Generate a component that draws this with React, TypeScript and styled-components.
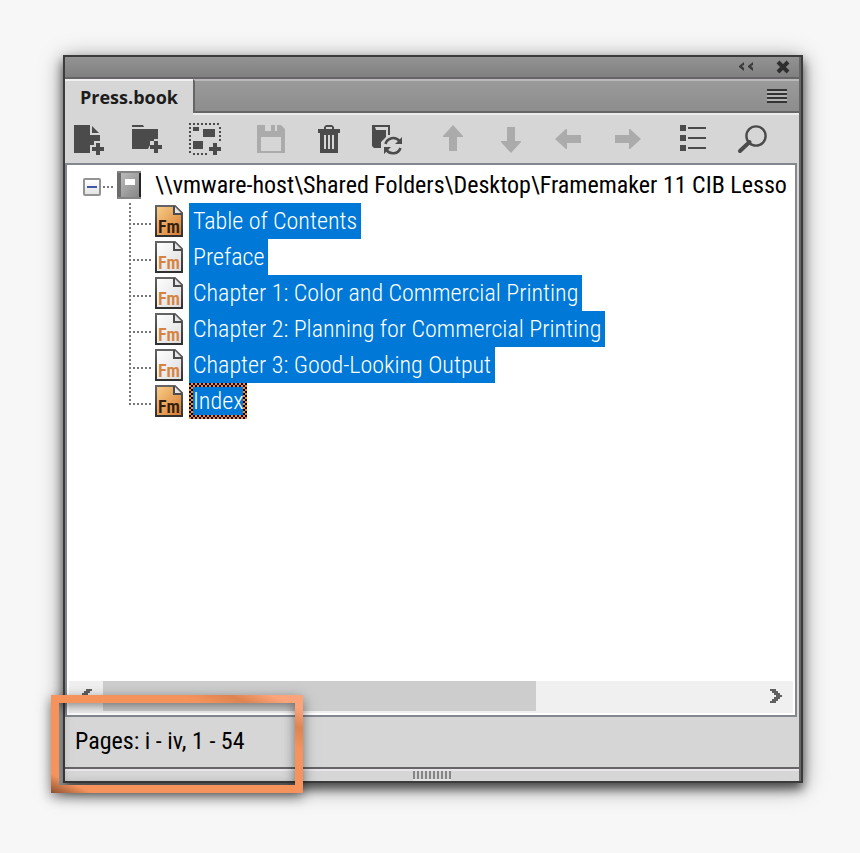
import React from "react";
import styled, { createGlobalStyle, css } from "styled-components";

const ink = "#4b4b4b";
const edge = "#3b3b3b";
const groove = "#666466";
const face = "#d6d6d6";
const listLine = "#828790";
const uiFont = `"Roboto Condensed", Roboto, "Liberation Sans", sans-serif`;

const GlobalStyle = createGlobalStyle`
  *, *::before, *::after { box-sizing: border-box; }
  body { margin: 0; background: #f7f7f7; }
  button { margin: 0; padding: 0; border: 0; background: none; color: inherit; font: inherit; }
  svg { display: block; }
`;

const Page = styled.div`
  display: flex;
  min-height: 100vh;
  padding: 55px 57px 70px 63px;
  font-family: ${uiFont};
  font-size: 24px;
  font-weight: 400;
  color: #000;
`;

const Panel = styled.section`
  position: relative;
  display: flex;
  flex: 1;
  min-width: 0;
  border: 2px solid ${edge};
  background: ${face};
  box-shadow: 0 6px 10px rgba(0, 0, 0, 0.6), 0 4px 22px rgba(0, 0, 0, 0.4);
`;

const PanelBody = styled.div`
  display: flex;
  flex: 1;
  flex-direction: column;
  min-width: 0;
  border-right: 2px solid ${groove};
`;

const TitleBar = styled.header`
  display: flex;
  align-items: center;
  justify-content: flex-end;
  gap: 22px;
  height: 22px;
  padding-right: 9px;
  border-bottom: 2px solid ${groove};
  background: linear-gradient(#939393, #808080);
`;

const TabBar = styled.div`
  display: flex;
  height: 36px;
`;

const Tab = styled.button`
  height: 36px;
  padding: 0 15px 2px;
  border-top: 2px solid #f0f0f0;
  background: ${face};
  color: #1c1c1c;
  font-family: "Open Sans", "Noto Sans", sans-serif;
  font-size: 18px;
  font-weight: 700;
  line-height: 32px;
`;

const TabRest = styled.div`
  display: flex;
  flex: 1;
  align-items: center;
  justify-content: flex-end;
  height: 34px;
  padding: 0 12px 0 0;
  border-top: 2px solid #b9b9b9;
  border-left: 2px solid ${groove};
  border-bottom: 2px solid ${groove};
  background: linear-gradient(#9a9a9a, #8d8d8d);
  box-shadow: 0 2px 0 #ececec;
`;

const Toolbar = styled.div`
  display: flex;
  gap: 18px;
  height: 48px;
`;

const ToolGroup = styled.div`
  display: flex;
  gap: 10px;
`;

const ToolButton = styled.button`
  display: flex;
  align-items: center;
  justify-content: center;
  width: 48px;
  color: ${ink};
  &:disabled { color: #ababab; }
`;

const ListFrame = styled.div`
  display: flex;
  flex: 1;
  flex-direction: column;
  min-height: 0;
  margin-right: 2px;
  border: 2px solid ${listLine};
  background: #fff;
`;

const Tree = styled.ul`
  flex: 1;
  margin: 0;
  padding: 2px 0 0;
  overflow: hidden;
  list-style: none;
`;

const Branch = styled.ul`
  margin: 0;
  padding: 0 0 0 62px;
  list-style: none;
`;

const Row = styled.div`
  display: flex;
  align-items: center;
  height: 36px;
  white-space: nowrap;
`;

const Expander = styled.button`
  display: flex;
  align-items: center;
  justify-content: center;
  width: 18px;
  height: 18px;
  margin: 4px 0 0 16px;
  border: 2px solid #939393;
  border-radius: 2px;
  background: linear-gradient(#fff, #e4e4e4);
  &::before { content: ""; width: 10px; height: 2px; background: #4058a8; }
`;

const RootLink = styled.span`
  width: 10px;
  height: 2px;
  margin: 4px 4px 0 2px;
  background: repeating-linear-gradient(90deg, #777 0 2px, transparent 2px 4px);
`;

const RootName = styled.span`
  margin-left: 14px;
`;

const Guide = styled.span<{ $last?: boolean }>`
  width: 22px;
  height: 36px;
  margin-right: 4px;
  background:
    repeating-linear-gradient(90deg, #777 0 2px, transparent 2px 4px) 0 20px / 100% 2px no-repeat,
    repeating-linear-gradient(#777 0 2px, transparent 2px 4px) 0 0 / 2px ${p => (p.$last ? "22px" : "100%")} no-repeat;
`;

const ItemLabel = styled.span<{ $focused?: boolean }>`
  height: 36px;
  margin-left: 6px;
  padding: 0 4px;
  background: #0078d7;
  color: #fff;
  font-weight: 300;
  line-height: 36px;
  ${p => p.$focused && css`
    padding: 0;
    border: 4px solid transparent;
    line-height: 28px;
    background:
      linear-gradient(#0078d7, #0078d7) padding-box,
      repeating-conic-gradient(#ff8728 0 25%, #000 0 50%) 0 0 / 4px 4px border-box;
  `}
`;

const ScrollBar = styled.div`
  display: flex;
  height: 32px;
  margin: 0 2px 2px;
  background: #f0f0f0;
`;

const ScrollArrow = styled.button`
  display: flex;
  align-items: center;
  justify-content: center;
  width: 34px;
  height: 30px;
  color: #606060;
`;

const ScrollTrack = styled.div`
  flex: 1;
`;

const ScrollThumb = styled.div`
  width: 66%;
  height: 30px;
  background: #cdcdcd;
`;

const Status = styled.div`
  height: 50px;
  padding-left: 10px;
  line-height: 49px;
`;

const GripBar = styled.footer`
  display: flex;
  justify-content: center;
  height: 14px;
  padding-top: 2px;
  border-top: 2px solid ${groove};
  box-shadow: inset 0 2px 0 #e8e6e8;
`;

const Grip = styled.span`
  width: 38px;
  height: 8px;
  background: repeating-linear-gradient(90deg, #858585 0 2px, transparent 2px 4px);
  box-shadow: 0 2px 0 #e4e4e4;
`;

const Callout = styled.div`
  position: absolute;
  left: -14px;
  bottom: -12px;
  width: 252px;
  height: 98px;
  border: 8px solid #f6935c;
  border-image: linear-gradient(25deg, #8a5231 0, #f6935c 9%, #f6935c 74%, #de8450 84%, #fba47a 93%) 8;
  box-shadow: 0 4px 12px rgba(0, 0, 0, 0.5), inset 0 2px 12px rgba(0, 0, 0, 0.5);
  pointer-events: none;
`;

const Plus = ({ x, y }: { x: number; y: number }) => (
  <path d={`M${x + 4} ${y}h4v4h4v4h-4v4h-4v-4h-4v-4h4z`} />
);

const tools = {
  addFile: <><path d="M1 2H17V12H27V18H21V22H17V30H1Z" /><path d="M19 3L26 10H19Z" /><Plus x={19} y={20} /></>,
  addFolder: <><path d="M1 2H12L13 4H1ZM1 6H27V16H23V18H19V22L17 26H1Z" /><Plus x={19} y={18} /></>,
  addGroup: <>
    <path d="M0 1H32M1 4V32M31 4V18M4 31H20" fill="none" stroke="currentColor" strokeWidth="2" strokeDasharray="2 2" />
    <path d="M4 4h6v4H4zM14 6h12v8H14zM4 18h10v8H4z" /><Plus x={20} y={20} />
  </>,
  save: <path fillRule="evenodd" d="M2 2H26L30 6V30H2ZM10 2V8H22V2H20V8H16V2ZM6 14V28H26V14Z" />,
  remove: <path fillRule="evenodd" d="M11 6V4L13 2H19L21 4V6H27V10H25V30H7V10H5V6ZM13 6H19V4H13ZM11 12V26H13V12ZM15 12V26H17V12ZM19 12V26H21V12Z" />,
  update: <>
    <path d="M1 2H19V12H17V4H4L5 7H15V14L10 19V25H3L1 23Z" />
    <g fill="none" stroke="currentColor" strokeWidth="2.6"><path d="M14.5 21A8 8 0 0 1 28.5 18M29.5 25A8 8 0 0 1 15.5 27" /></g>
    <path d="M31 14V21H24ZM13 31V24H20Z" />
  </>,
  up: <path d="M16 2L26 13V14H20V28H12V14H6V13Z" />,
  down: <path d="M12 4H20V18H26V19L16 30L6 19V18H12Z" />,
  left: <path d="M2 16L13 6H14V12H28V20H14V26H13Z" />,
  right: <path d="M30 16L19 6H18V12H4V20H18V26H19Z" />,
  list: <path d="M3 2h6v6H3zM11 4h18v2H11zM3 12h6v6H3zM11 14h18v2H11zM3 22h6v6H3zM11 24h18v2H11z" />,
  find: <g fill="none" stroke="currentColor"><circle cx="21" cy="13" r="9.6" strokeWidth="2.4" /><path d="M14.5 19L5 28" strokeWidth="4" strokeLinecap="round" /></g>,
};

type Tool = { icon: keyof typeof tools; name: string; off?: boolean };

const toolGroups: Tool[][] = [
  [{ icon: "addFile", name: "Add file" }, { icon: "addFolder", name: "Add folder" }, { icon: "addGroup", name: "Add group" }],
  [{ icon: "save", name: "Save book", off: true }, { icon: "remove", name: "Delete" }, { icon: "update", name: "Update book" }],
  [
    { icon: "up", name: "Move up", off: true }, { icon: "down", name: "Move down", off: true },
    { icon: "left", name: "Move left", off: true }, { icon: "right", name: "Move right", off: true },
  ],
  [{ icon: "list", name: "Display headings" }, { icon: "find", name: "Find" }],
];

const BookIcon = () => (
  <svg width="24" height="28" viewBox="0 0 24 28" aria-hidden="true">
    <defs>
      <linearGradient id="cover" x1="0" y1="0" x2="1" y2="1"><stop stopColor="#c2c2c2" /><stop offset="1" stopColor="#828282" /></linearGradient>
    </defs>
    <path fill="url(#cover)" d="M0 0H24V28H0Z" />
    <path fill="#6c6c6c" d="M0 0H4V28H0Z" />
    <path fill="#848484" d="M0 0H24V2H0ZM0 26H22V28H0Z" />
    <path fill="#252525" d="M22 2H24V26H22Z" />
    <path fill="#fff" d="M8 8H18V14H8Z" />
  </svg>
);

const FileIcon = ({ generated }: { generated: boolean }) => (
  <svg width="28" height="32" viewBox="0 0 28 32" aria-hidden="true">
    <defs>
      <linearGradient id="amber" x1="0" y1="0" x2="1" y2="1"><stop stopColor="#f8cf8a" /><stop offset="1" stopColor="#d87a30" /></linearGradient>
      <linearGradient id="paper" x1="0" y1="0" x2="1" y2="1"><stop stopColor="#fff" /><stop offset="1" stopColor="#dcdcdc" /></linearGradient>
      <linearGradient id="rim" x1="0" y1="0" x2="0" y2="1"><stop stopColor="#646464" /><stop offset="1" stopColor="#303030" /></linearGradient>
    </defs>
    <path d="M1 1H20L27 8V31H1Z" fill={generated ? "url(#amber)" : "url(#paper)"} stroke="url(#rim)" strokeWidth="2" />
    <path d="M19 1V9H27" fill="#e6e6e6" stroke="#4c4c4c" strokeWidth="2" />
    <text x="3" y="28" fontFamily={uiFont} fontSize="18" fontWeight="600" fill={generated ? "#33200c" : "#d5833e"}>Fm</text>
  </svg>
);

const files = [
  { name: "Table of Contents", generated: true },
  { name: "Preface", generated: false },
  { name: "Chapter 1: Color and Commercial Printing", generated: false },
  { name: "Chapter 2: Planning for Commercial Printing", generated: false },
  { name: "Chapter 3: Good-Looking Output", generated: false },
  { name: "Index", generated: true },
];

export default function App() {
  return (
    <>
      <GlobalStyle />
      <Page>
        <Panel aria-label="Book">
          <PanelBody>
            <TitleBar>
              <button aria-label="Collapse panel">
                <svg width="16" height="12" viewBox="0 0 16 12" fill="#3a3a3a"><path d="M6 1V4L4 5L6 7V10L1 6V5ZM15 1V4L13 5L15 7V10L10 6V5Z" /></svg>
              </button>
              <button aria-label="Close panel">
                <svg width="14" height="14" viewBox="0 0 14 14" fill="none" stroke="#2e2e2e" strokeWidth="4"><path d="M2 2L12 12M12 2L2 12" /></svg>
              </button>
            </TitleBar>
            <TabBar role="tablist">
              <Tab role="tab" aria-selected="true">Press.book</Tab>
              <TabRest>
                <button aria-label="Panel menu">
                  <svg width="20" height="16" viewBox="0 0 20 16">
                    <path fill="#343434" d="M0 1h20v2H0zM0 5h20v2H0zM0 9h20v2H0zM0 13h20v2H0z" />
                    <path fill="#b4b4b4" d="M0 3h20v2H0zM0 7h20v2H0zM0 11h20v2H0z" />
                  </svg>
                </button>
              </TabRest>
            </TabBar>
            <Toolbar role="toolbar">
              {toolGroups.map((group, i) => (
                <ToolGroup key={i}>
                  {group.map(t => (
                    <ToolButton key={t.icon} aria-label={t.name} disabled={t.off}>
                      <svg width="32" height="32" viewBox="0 0 32 32" fill="currentColor">{tools[t.icon]}</svg>
                    </ToolButton>
                  ))}
                </ToolGroup>
              ))}
            </Toolbar>
            <ListFrame>
              <Tree role="tree">
                <li role="treeitem" aria-expanded="true">
                  <Row>
                    <Expander aria-label="Collapse book" />
                    <RootLink />
                    <BookIcon />
                    <RootName>\\vmware-host\Shared Folders\Desktop\Framemaker 11 CIB Lesso</RootName>
                  </Row>
                  <Branch role="group">
                    {files.map((f, i) => {
                      const last = i === files.length - 1;
                      return (
                        <li key={f.name} role="treeitem" aria-selected="true">
                          <Row>
                            <Guide $last={last} />
                            <FileIcon generated={f.generated} />
                            <ItemLabel $focused={last}>{f.name}</ItemLabel>
                          </Row>
                        </li>
                      );
                    })}
                  </Branch>
                </li>
              </Tree>
              <ScrollBar>
                <ScrollArrow aria-label="Scroll left">
                  <svg width="12" height="14" viewBox="0 0 12 14" fill="currentColor"><path d="M12 0H6V2H4V4H2V6H0V8H2V10H4V12H6V14H12V12H10V10H8V8H6V6H8V4H10V2H12Z" /></svg>
                </ScrollArrow>
                <ScrollTrack><ScrollThumb /></ScrollTrack>
                <ScrollArrow aria-label="Scroll right">
                  <svg width="12" height="14" viewBox="0 0 12 14" fill="currentColor"><path d="M0 0H6V2H8V4H10V6H12V8H10V10H8V12H6V14H0V12H2V10H4V8H6V6H4V4H2V2H0Z" /></svg>
                </ScrollArrow>
              </ScrollBar>
            </ListFrame>
            <Status role="status">Pages: i - iv, 1 - 54</Status>
            <GripBar><Grip /></GripBar>
          </PanelBody>
          <Callout aria-hidden="true" />
        </Panel>
      </Page>
    </>
  );
}
